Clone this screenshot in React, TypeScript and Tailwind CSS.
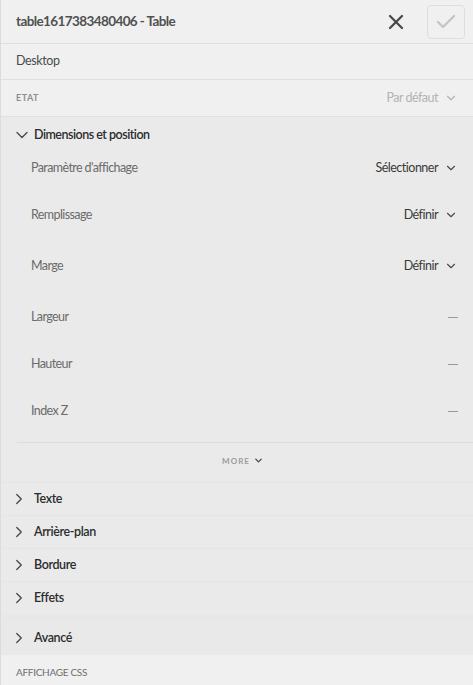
import { X, Check, ChevronDown, ChevronRight } from "lucide-react";

const props = [
  { label: "Paramètre d'affichage", value: "Sélectionner", h: "h-[47px]" },
  { label: "Remplissage", value: "Définir", h: "h-[51px]" },
  { label: "Marge", value: "Définir", h: "h-[51px]" },
  { label: "Largeur", value: "", h: "h-[47px]" },
  { label: "Hauteur", value: "", h: "h-[47px]" },
  { label: "Index Z", value: "", h: "h-[49px]" },
];

const sections = ["Texte", "Arrière-plan", "Bordure", "Effets"];

const PropRow = ({ label, value, h }: { label: string; value: string; h: string }) => (
  <div className={`flex items-start justify-between pl-[30px] pr-[15px] pt-[10px] ${h}`}>
    <span className="text-[12.5px] leading-[16px] tracking-[-0.6px] text-[#6a6a6a]">{label}</span>
    {value ? (
      <span className="flex items-center gap-[6px] text-[12.5px] leading-[16px] tracking-[-0.5px] text-[#3a3a3a]">
        {value}
        <ChevronDown className="w-[14px] h-[14px] text-[#4b4b4b]" strokeWidth={2} />
      </span>
    ) : (
      <span className="block w-[10px] h-px bg-[#9a9a9a] mt-[8px]" />
    )}
  </div>
);

export default function App() {
  return (
    <div
      className="w-[473px] h-[685px] overflow-hidden bg-[#f0f0f0] border-l border-[#dcdcdc] flex flex-col"
      style={{ fontFamily: "Lato, 'Open Sans', sans-serif" }}
    >
      {/* header */}
      <div className="h-[44px] flex items-center justify-between pl-[15px] pr-[8px] border-b border-[#e0e0e0] shrink-0">
        <span className="text-[13.5px] font-bold tracking-[-0.6px] text-[#505050]">table1617383480406 - Table</span>
        <div className="flex items-center gap-[19px]">
          <X className="w-[24px] h-[24px] text-[#4b4b4b]" strokeWidth={2.3} />
          <button className="w-[38px] h-[34px] rounded-[4px] border border-[#dedede] flex items-center justify-center">
            <Check className="w-[24px] h-[24px] text-[#c4c4c4]" strokeWidth={2.3} />
          </button>
        </div>
      </div>

      <div className="h-[36px] flex items-center pl-[15px] border-b border-[#e0e0e0] shrink-0">
        <span className="text-[12.5px] tracking-[-0.4px] text-[#4b4b4b]">Desktop</span>
      </div>

      <div className="h-[37px] flex items-center justify-between pl-[15px] pr-[15px] border-b border-[#e0e0e0] shrink-0">
        <span className="text-[9px] font-bold tracking-[0.5px] text-[#8e8e8e]">ETAT</span>
        <span className="flex items-center gap-[6px] text-[12.5px] tracking-[-0.5px] text-[#b3b3b3]">
          Par défaut
          <ChevronDown className="w-[14px] h-[14px]" strokeWidth={2} />
        </span>
      </div>

      {/* dimensions */}
      <div className="bg-[#eaeaea] shrink-0">
        <div className="h-[33px] flex items-center gap-[2px] pl-[11px] pt-[3px]">
          <ChevronDown className="w-[20px] h-[20px] text-[#4b4b4b]" strokeWidth={1.6} />
          <span className="text-[12.5px] font-semibold tracking-[-0.5px] text-[#2c2c2c]">Dimensions et position</span>
        </div>
        {props.map((p) => (
          <PropRow key={p.label} {...p} />
        ))}
        <div className="ml-[16px] border-t border-[#dcdcdc] h-[40px] flex items-center justify-center gap-[3px] pr-[4px] pb-[4px]">
          <span className="text-[8px] font-bold tracking-[1px] text-[#9a9a9a]">MORE</span>
          <ChevronDown className="w-[11px] h-[11px] text-[#4b4b4b]" strokeWidth={3} />
        </div>
      </div>

      {sections.map((s) => (
        <div
          key={s}
          className="h-[33px] flex items-center gap-[6px] pl-[9px] bg-[#eaeaea] border-t border-[#e5e5e5] shrink-0"
        >
          <ChevronRight className="w-[18px] h-[18px] text-[#4b4b4b]" strokeWidth={1.8} />
          <span className="text-[12.5px] font-semibold tracking-[-0.4px] text-[#2c2c2c]">{s}</span>
        </div>
      ))}

      <div className="h-[7px] bg-[#e8e8e8] shrink-0" />
      <div className="h-[34px] flex items-center gap-[6px] pl-[9px] bg-[#e9e9e9] shrink-0">
        <ChevronRight className="w-[18px] h-[18px] text-[#4b4b4b]" strokeWidth={1.8} />
        <span className="text-[12.5px] font-semibold tracking-[-0.4px] text-[#2c2c2c]">Avancé</span>
      </div>

      <div className="h-[34px] flex items-center pl-[15px] bg-[#f0f0f0] shrink-0">
        <span className="text-[10px] tracking-[-0.3px] text-[#6e6e6e]">AFFICHAGE CSS</span>
      </div>
    </div>
  );
}
